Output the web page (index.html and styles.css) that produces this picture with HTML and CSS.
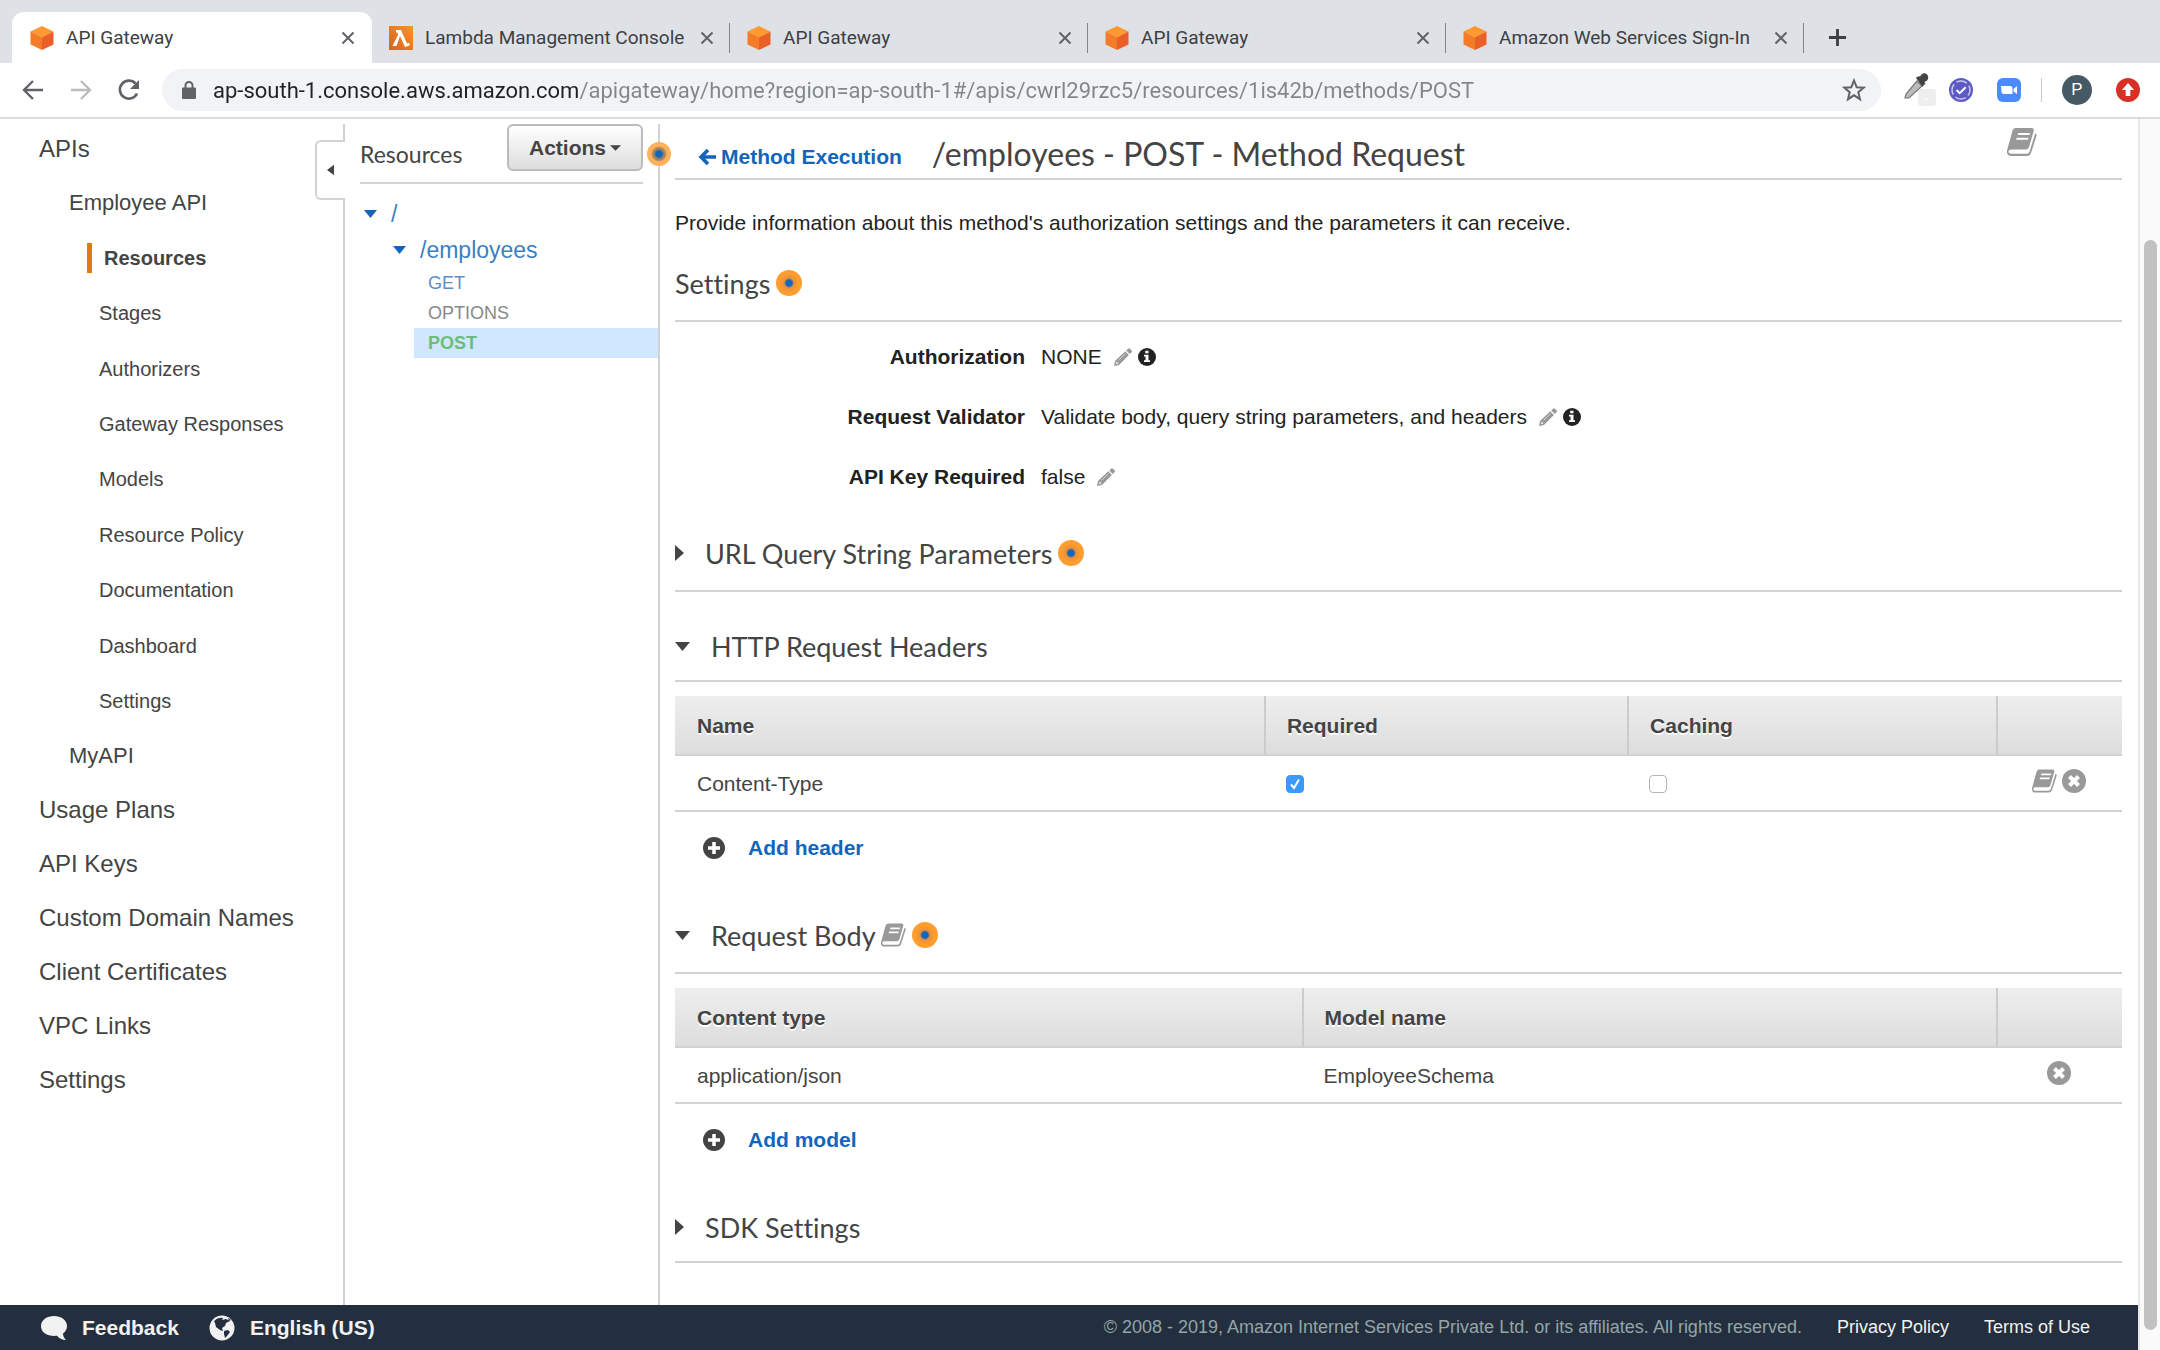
FILE: index.html
```html
<!DOCTYPE html>
<html lang="en">
<head>
<meta charset="utf-8">
<title>API Gateway</title>
<meta name="viewport" content="width=device-width, initial-scale=1.0">
<link rel="stylesheet" href="styles.css">
</head>
<body>

<!-- shared icons -->
<svg class="sprite" width="0" height="0" aria-hidden="true">
    <symbol id="cube" viewBox="0 0 24 24">
        <path d="M12 0 23.500 5.500 12 12 .5 5.500z" fill="#ff9a33"/>
        <path d="M.5 5.500 12 11.500V24L.5 18.500z" fill="#f47b28"/>
        <path d="M23.500 5.500 12 11.500V24l11.500-5.500z" fill="#ea5f28"/>
    </symbol>
    <symbol id="close" viewBox="0 0 14 14">
        <path d="M1.500 1.500l11 11M12.500 1.500l-11 11" stroke="#5f6368" stroke-width="2" fill="none"/>
    </symbol>
    <symbol id="book" viewBox="0 0 28 26">
        <path fill="#999" fill-rule="evenodd" d="M8 0h15q2.500 0 2 2.500L20.500 18q-.7 2-2.700 2H4q-2 0-2.500 1.500Q1 24 4 24h14.500q2 0 2.500-2L26.500 4.500q1.500 1 1 3L22.500 23q-1 3-4 3H4q-4.500 0-4-5L5 3Q5.800 0 8 0zM10.500 4.500 10 6.500h11l.5-2zM9 9l-.5 2h11l.5-2z"/>
    </symbol>
    <symbol id="pencil" viewBox="0 0 18 18">
        <path fill="#999" d="M14 .7q1-1 2 0l1.500 1.500q1 1 0 2L15.800 6 12.200 2.400zM11.300 3.300l3.600 3.600L5 17 0 18l1-5z"/>
        <path d="M4.500 12.500l7-7" stroke="#d5d5d5" stroke-width="1"/>
        <path d="M2.500 13.500l2 2-2.300.4z" fill="#fff"/>
    </symbol>
    <symbol id="info" viewBox="0 0 18 18">
        <circle cx="9" cy="9" r="9" fill="#222"/>
        <path fill="#fff" d="M7.200 2.800h3.300v2.500H7.200zM6 6.800h4.500v5.400H12V14H6v-1.800h1.500V8.600H6z"/>
    </symbol>
    <symbol id="remove" viewBox="0 0 24 24">
        <circle cx="12" cy="12" r="12" fill="#999"/>
        <path d="M7.500 7.500l9 9M16.500 7.500l-9 9" stroke="#fff" stroke-width="4"/>
    </symbol>
    <symbol id="plus" viewBox="0 0 22 22">
        <circle cx="11" cy="11" r="11" fill="#444"/>
        <path d="M11 5v12M5 11h12" stroke="#fff" stroke-width="3.500"/>
    </symbol>
</svg>

<header class="browser">
    <div class="tabs">
        <div class="tab active">
            <svg class="favicon"><use href="#cube"/></svg>
            <span>API Gateway</span>
            <button type="button" aria-label="Close tab"><svg><use href="#close"/></svg></button>
        </div>
        <div class="tab">
            <svg class="favicon" viewBox="0 0 24 24">
                <defs><linearGradient id="lam" x1="0" y1="1" x2="1" y2="0"><stop offset="0" stop-color="#d9601f"/><stop offset="1" stop-color="#f8942a"/></linearGradient></defs>
                <path d="M0 0h24v24H0z" fill="url(#lam)"/>
                <path d="M7 4h5l6 13.500 2-.7 1 2.500-5 1.700-5-11L7.500 20H3.500l5.700-11.500-1-2H7z" fill="#fff"/>
            </svg>
            <span>Lambda Management Console</span>
            <button type="button" aria-label="Close tab"><svg><use href="#close"/></svg></button>
        </div>
        <div class="tab">
            <svg class="favicon"><use href="#cube"/></svg>
            <span>API Gateway</span>
            <button type="button" aria-label="Close tab"><svg><use href="#close"/></svg></button>
        </div>
        <div class="tab">
            <svg class="favicon"><use href="#cube"/></svg>
            <span>API Gateway</span>
            <button type="button" aria-label="Close tab"><svg><use href="#close"/></svg></button>
        </div>
        <div class="tab">
            <svg class="favicon"><use href="#cube"/></svg>
            <span>Amazon Web Services Sign-In</span>
            <button type="button" aria-label="Close tab"><svg><use href="#close"/></svg></button>
        </div>
        <button type="button" class="new-tab" aria-label="New tab">
            <svg viewBox="0 0 20 20"><path d="M10 1v18M1 10h18" stroke="#3c4043" stroke-width="3"/></svg>
        </button>
    </div>

    <div class="toolbar">
        <button type="button" aria-label="Back"><svg viewBox="0 0 24 24"><path d="M22 12H4M12 3l-9 9 9 9" fill="none" stroke="#5f6368" stroke-width="2.400"/></svg></button>
        <button type="button" aria-label="Forward"><svg viewBox="0 0 24 24"><path d="M2 12h18M12 3l9 9-9 9" fill="none" stroke="#babcbe" stroke-width="2.400"/></svg></button>
        <button type="button" aria-label="Reload"><svg viewBox="0 0 24 24"><path d="M20 15.500A9 9 0 1 1 18.500 5.500" fill="none" stroke="#5f6368" stroke-width="2.600"/><path d="M22 2v9h-9z" fill="#5f6368"/></svg></button>
        <div class="address">
            <svg class="lock" viewBox="0 0 14 18"><path d="M1 6.500h12q1 0 1 1V17q0 1-1 1H1q-1 0-1-1V7.500q0-1 1-1z" fill="#5f6368"/><path d="M3.500 7V4.500a3.500 3.500 0 0 1 7 0V7" fill="none" stroke="#5f6368" stroke-width="2"/></svg>
            <input type="text" aria-label="Address" value="ap-south-1.console.aws.amazon.com/apigateway/home?region=ap-south-1#/apis/cwrl29rzc5/resources/1is42b/methods/POST">
            <button type="button" aria-label="Bookmark this page"><svg viewBox="0 0 24 24"><path d="M12 2.500l2.700 6.700 7 .5-5.400 4.500 1.700 7-6-3.900-6 3.900 1.700-7-5.400-4.500 7-.5z" fill="none" stroke="#5f6368" stroke-width="2"/></svg></button>
        </div>
        <div class="extensions">
            <button type="button" class="picker" aria-label="Color picker">
                <svg viewBox="0 0 34 34">
                    <rect x="15" y="16" width="18" height="17" rx="3" fill="#eee"/><circle cx="23" cy="26" r="1" fill="#fff"/>
                    <path d="M14 8l5 5L6 25l-4 0 1-4z" fill="#bbb" stroke="#777" stroke-width="1.200"/>
                    <path d="M14 5l2-1 1 1 2-3q2.500-2 4.500 0 2 2.500 0 5l-3 2 1 1.500-2 2z" fill="#444" stroke="#444" stroke-width="1.500"/>
                </svg>
            </button>
            <button type="button" aria-label="Task checker">
                <svg viewBox="0 0 24 24"><circle cx="12" cy="12" r="12" fill="#5d5ac6"/><circle cx="12" cy="12" r="9" fill="none" stroke="#c9c8f0" stroke-width="1.500" stroke-dasharray="11 3.140" stroke-dashoffset="5"/><path d="M7.500 12l3.200 3.200 6-6" fill="none" stroke="#fff" stroke-width="2"/></svg>
            </button>
            <button type="button" aria-label="Video meeting">
                <svg viewBox="0 0 24 24"><rect width="24" height="24" rx="6" fill="#4a8cff"/><path d="M4 8h9q2.500 0 2.500 2.500V16H7q-2.500 0-2.500-2.500zM16.500 11l3.500-3v8l-3.500-2.500z" fill="#fff"/></svg>
            </button>
            <span class="divider"></span>
            <button type="button" class="profile">P</button>
            <button type="button" aria-label="Update browser">
                <svg viewBox="0 0 24 24"><circle cx="12" cy="12" r="12" fill="#d93025"/><path d="M12 5l6 7h-3.700v6H9.700v-6H6z" fill="#fff"/></svg>
            </button>
        </div>
    </div>
</header>

<div class="viewport">
    <div class="page">
        <div class="workspace">
            <nav class="sidebar">
                <ul>
                    <li><a href="#">APIs</a></li>
                    <li>
                        <ul class="api-list">
                            <li><a href="#">Employee API</a>
                                <ul class="api-menu">
                                    <li class="current"><a href="#">Resources</a></li>
                                    <li><a href="#">Stages</a></li>
                                    <li><a href="#">Authorizers</a></li>
                                    <li><a href="#">Gateway Responses</a></li>
                                    <li><a href="#">Models</a></li>
                                    <li><a href="#">Resource Policy</a></li>
                                    <li><a href="#">Documentation</a></li>
                                    <li><a href="#">Dashboard</a></li>
                                    <li><a href="#">Settings</a></li>
                                </ul>
                            </li>
                            <li><a href="#">MyAPI</a></li>
                        </ul>
                    </li>
                    <li><a href="#">Usage Plans</a></li>
                    <li><a href="#">API Keys</a></li>
                    <li><a href="#">Custom Domain Names</a></li>
                    <li><a href="#">Client Certificates</a></li>
                    <li><a href="#">VPC Links</a></li>
                    <li><a href="#">Settings</a></li>
                </ul>
                <button type="button" class="collapse" aria-label="Collapse navigation"><svg viewBox="0 0 8 12"><path d="M8 0v12L0 6z" fill="#444"/></svg></button>
            </nav>

            <section class="resources">
                <div class="resources-head">
                    <h2>Resources</h2>
                    <button type="button" class="actions">Actions<svg viewBox="0 0 12 6"><path d="M0 0h12L6 6z" fill="#444"/></svg></button>
                    <span class="hint hint-edge"></span>
                </div>
                <ul class="tree">
                    <li class="tree-root"><svg viewBox="0 0 13 8"><path d="M0 0h13L6.500 8z" fill="#1166bb"/></svg><a href="#">/</a></li>
                    <li class="tree-child"><svg viewBox="0 0 13 8"><path d="M0 0h13L6.500 8z" fill="#1166bb"/></svg><a href="#">/employees</a></li>
                    <li class="method get"><a href="#">GET</a></li>
                    <li class="method options"><a href="#">OPTIONS</a></li>
                    <li class="method post"><a href="#">POST</a></li>
                </ul>
            </section>

            <main class="detail">
                <div class="detail-head">
                    <a href="#" class="back"><svg viewBox="0 0 18 18"><path d="M10 2L3 9l7 7M3 9h15" fill="none" stroke="#1166bb" stroke-width="3.600"/></svg>Method Execution</a>
                    <h1>/employees - POST - Method Request</h1>
                    <button type="button" class="icon-btn docs" aria-label="Documentation"><svg><use href="#book"/></svg></button>
                </div>
                <p class="intro">Provide information about this method's authorization settings and the parameters it can receive.</p>

                <h2 class="section-title with-hint">Settings<span class="hint"></span></h2>
                <dl class="settings">
                    <dt>Authorization</dt>
                    <dd>NONE <button type="button" class="icon-btn" aria-label="Edit authorization"><svg><use href="#pencil"/></svg></button><svg><use href="#info"/></svg></dd>
                    <dt>Request Validator</dt>
                    <dd>Validate body, query string parameters, and headers <button type="button" class="icon-btn" aria-label="Edit request validator"><svg><use href="#pencil"/></svg></button><svg><use href="#info"/></svg></dd>
                    <dt>API Key Required</dt>
                    <dd>false <button type="button" class="icon-btn" aria-label="Edit API key required"><svg><use href="#pencil"/></svg></button></dd>
                </dl>

                <section class="closed">
                    <h2 class="section-title with-hint"><svg class="arrow-right" viewBox="0 0 9 16"><path d="M0 0l9 8-9 8z" fill="#444"/></svg>URL Query String Parameters<span class="hint"></span></h2>
                </section>

                <section>
                    <h2 class="section-title"><svg class="arrow-down" viewBox="0 0 15 9"><path d="M0 0h15L7.500 9z" fill="#444"/></svg>HTTP Request Headers</h2>
                    <table class="headers-table">
                        <colgroup><col class="c-name"><col class="c-required"><col><col class="c-tools"></colgroup>
                        <thead>
                            <tr><th>Name</th><th>Required</th><th>Caching</th><th></th></tr>
                        </thead>
                        <tbody>
                            <tr>
                                <td>Content-Type</td>
                                <td><input type="checkbox" aria-label="Required" checked></td>
                                <td><input type="checkbox" aria-label="Caching"></td>
                                <td class="tools">
                                    <button type="button" class="icon-btn" aria-label="Documentation"><svg class="book"><use href="#book"/></svg></button>
                                    <button type="button" class="icon-btn" aria-label="Remove header"><svg><use href="#remove"/></svg></button>
                                </td>
                            </tr>
                        </tbody>
                    </table>
                    <div class="add"><svg><use href="#plus"/></svg><a href="#">Add header</a></div>
                </section>

                <section>
                    <h2 class="section-title with-hint"><svg class="arrow-down" viewBox="0 0 15 9"><path d="M0 0h15L7.500 9z" fill="#444"/></svg>Request Body<svg class="book"><use href="#book"/></svg><span class="hint"></span></h2>
                    <table class="body-table">
                        <colgroup><col class="c-type"><col><col class="c-tools"></colgroup>
                        <thead>
                            <tr><th>Content type</th><th>Model name</th><th></th></tr>
                        </thead>
                        <tbody>
                            <tr>
                                <td>application/json</td>
                                <td>EmployeeSchema</td>
                                <td class="tools">
                                    <button type="button" class="icon-btn" aria-label="Remove model"><svg><use href="#remove"/></svg></button>
                                </td>
                            </tr>
                        </tbody>
                    </table>
                    <div class="add"><svg><use href="#plus"/></svg><a href="#">Add model</a></div>
                </section>

                <section class="closed">
                    <h2 class="section-title"><svg class="arrow-right" viewBox="0 0 9 16"><path d="M0 0l9 8-9 8z" fill="#444"/></svg>SDK Settings</h2>
                </section>
            </main>
        </div>

        <footer class="footer">
            <a href="#" class="footer-main"><svg viewBox="0 0 26 26"><path d="M13 1c7 0 13 4 13 10 0 3-1.500 5.500-4 7.500 0 2.500 1 4.500 3 6.500-4 0-7-1.500-9-4.200C6.500 21.500 0 18 0 11 0 5 6 1 13 1z" fill="#f2f2f2"/></svg>Feedback</a>
            <a href="#" class="footer-main"><svg viewBox="0 0 26 26"><circle cx="13" cy="13" r="12.500" fill="#f2f2f2"/><path d="M5 6q4-4 9-3l-1 2 4-1 4 2-4 2-1 3-3 2 1 3-3-1-4-3-1-4zM15 16l4-1 2 2-3 4-2 2-1-4zM19 3l3 2-2 1z" fill="#232f3e"/></svg>English (US)</a>
            <span class="copyright">© 2008 - 2019, Amazon Internet Services Private Ltd. or its affiliates. All rights reserved.</span>
            <a href="#">Privacy Policy</a>
            <a href="#">Terms of Use</a>
        </footer>
    </div>
    <div class="scrollbar"><div class="thumb"></div></div>
</div>

</body>
</html>
```
FILE: styles.css
```css
* {
    box-sizing: border-box;
}
body {
    margin: 0;
    min-height: 100vh;
    display: flex;
    flex-direction: column;
    font-family: "Liberation Sans", Arial, sans-serif;
    font-size: 20px;
    color: #444;
    background: #fff;
}
ul, dl, dd, h1, h2, p {
    margin: 0;
    padding: 0;
    list-style: none;
}
h1, h2 {
    font-family: Lato, sans-serif;
    font-weight: normal;
    font-variant-ligatures: none;
}
a {
    color: inherit;
    text-decoration: none;
}
button {
    padding: 0;
    border: 0;
    background: none;
    font-family: inherit;
    cursor: pointer;
}
button svg {
    display: block;
}
.sprite {
    position: absolute;
}

/* browser tabs */
.tabs {
    display: flex;
    height: 63px;
    padding: 12px 0 0 12px;
    background: #dee1e6;
    font-family: Roboto, sans-serif;
    font-size: 19px;
    color: #3c4043;
}
.tab {
    display: flex;
    align-items: center;
    flex: 0 1 358px;
    padding: 0 16px 0 17px;
    position: relative;
}
.tab.active {
    flex-basis: 360px;
    background: #fff;
    border-radius: 12px 12px 0 0;
    padding: 0 17px 0 18px;
}
.tab:not(.active)::after {
    content: "";
    position: absolute;
    right: 0;
    top: 11px;
    width: 1px;
    height: 30px;
    background: #80868b;
}
.tab span {
    flex: 1;
    white-space: nowrap;
}
.tab button svg {
    width: 14px;
    height: 14px;
}
.favicon {
    width: 24px;
    height: 24px;
    margin-right: 12px;
}
.new-tab {
    margin-left: 24px;
}
.new-tab svg {
    width: 19px;
    height: 19px;
}

/* address bar */
.toolbar {
    display: flex;
    align-items: center;
    gap: 24px;
    height: 56px;
    padding: 0 20px 0 21px;
    border-bottom: 2px solid #dadce0;
}
.toolbar button svg {
    width: 24px;
    height: 24px;
}
.address {
    flex: 1;
    display: flex;
    align-items: center;
    height: 42px;
    padding: 0 15px 0 20px;
    margin-left: -3px;
    border-radius: 21px;
    background: #f1f3f4;
}
.lock {
    width: 14px;
    height: 18px;
}
.address input {
    flex: 1;
    min-width: 0;
    margin-left: 17px;
    padding: 0;
    border: 0;
    font-family: Roboto, sans-serif;
    font-size: 22px;
    /* host dark, path grey */
    color: transparent;
    background: linear-gradient(to right, #202124 367px, #80868b 367px);
    -webkit-background-clip: text;
    background-clip: text;
}
.extensions {
    display: flex;
    align-items: center;
    gap: 24px;
}
.extensions .picker {
    margin: 0 -12px 0 -2px;
}
.toolbar .picker svg {
    width: 34px;
    height: 34px;
}
.divider {
    width: 1px;
    height: 24px;
    margin: 0 -4px;
    background: #ccc;
}
.profile {
    width: 30px;
    height: 30px;
    border-radius: 50%;
    background: #455a64;
    color: #fff;
    font-size: 17px;
}

/* page area */
.viewport {
    flex: 1;
    display: grid;
    grid-template-columns: 1fr 22px;
}
.page {
    display: flex;
    flex-direction: column;
    min-width: 0;
}
.workspace {
    flex: 1;
    display: flex;
    padding-top: 5px;
}
.scrollbar {
    display: flex;
    padding: 121px 3px 20px 4px;
    border-left: 2px solid #e8e8e8;
    background: #fafafa;
}
.thumb {
    flex: 1;
    border-radius: 7px;
    background: #c1c1c1;
}

/* left navigation */
.sidebar {
    flex: 0 0 345px;
    position: relative;
    padding-left: 39px;
    border-right: 2px solid #d2d2d2;
    font-size: 24px;
    line-height: 54px;
}
.sidebar > ul {
    margin-top: -2px;
}
.sidebar a {
    display: block;
}
.api-list {
    padding-left: 30px;
    font-size: 22px;
}
.api-menu {
    display: grid;
    grid-auto-rows: 1fr;
    align-items: center;
    min-height: 499px;
    padding-left: 30px;
    font-size: 20px;
}
.api-menu .current {
    margin-left: -12px;
    padding-left: 12px;
    border-left: 5px solid #e47911;
}
.api-menu .current a {
    line-height: 30px;
    font-weight: bold;
}
.collapse {
    position: absolute;
    top: 16px;
    right: -2px;
    width: 30px;
    height: 60px;
    padding-left: 10px;
    border: 2px solid #d2d2d2;
    border-right: 0;
    border-radius: 6px 0 0 6px;
    background: #fff;
}
.collapse svg {
    width: 7px;
    height: 12px;
}

/* resource tree */
.resources {
    flex: 0 0 315px;
    padding-left: 15px;
    border-right: 2px solid #d2d2d2;
}
.resources-head {
    position: relative;
    display: flex;
    justify-content: space-between;
    align-items: flex-start;
    height: 60px;
    margin-right: 15px;
    border-bottom: 2px solid #d2d2d2;
}
.resources-head h2 {
    font-size: 23px;
    line-height: 60px;
}
.actions {
    display: flex;
    align-items: center;
    justify-content: center;
    gap: 4px;
    width: 136px;
    height: 47px;
    border: 2px solid #bbb;
    border-radius: 6px;
    background: linear-gradient(#fff, #ddd);
    color: #444;
    font-size: 21px;
    font-weight: bold;
}
.actions svg {
    width: 11px;
    height: 6px;
}
.hint {
    flex: none;
    width: 26px;
    height: 26px;
    border-radius: 50%;
    background: radial-gradient(circle, #1166bb 3px, #e8923c 5px, #f8962f 8px, #ff9d2e 9px);
}
.hint-edge {
    position: absolute;
    right: -28px;
    top: 18px;
    width: 24px;
    height: 24px;
    background: radial-gradient(circle, #1166bb 3px, #a58358 5px, #a58358 6px, #ffb15c 8px);
}
.tree {
    padding-top: 12px;
    color: #3b7fc4;
}
.tree li {
    display: flex;
    align-items: center;
    height: 36px;
}
.tree svg {
    width: 13px;
    height: 8px;
    margin-right: 14px;
}
.tree-root, .tree-child {
    font-size: 23px;
}
.tree-root {
    padding-left: 4px;
}
.tree-child {
    padding-left: 33px;
}
.tree .method {
    height: 30px;
    margin-left: 54px;
    padding-left: 14px;
    font-size: 18px;
}
.get {
    color: #5c8fc4;
}
.options {
    color: #888;
}
.post {
    background: #d1e7ff;
    color: #6bbd7b;
    font-weight: bold;
}

/* method detail */
.detail {
    flex: 1;
    min-width: 0;
    padding: 0 16px 0 15px;
    font-size: 21px;
}
.detail svg {
    flex: none;
    width: 18px;
    height: 18px;
}
.detail-head {
    display: flex;
    align-items: center;
    height: 56px;
    padding: 4px 85px 0 23px;
    border-bottom: 2px solid #d2d2d2;
}
.back {
    display: flex;
    align-items: center;
    gap: 5px;
    padding-top: 8px;
    color: #1166bb;
    font-weight: bold;
}
h1 {
    flex: 1;
    margin-left: 30px;
    font-size: 32px;
}
.icon-btn svg {
    vertical-align: middle;
}
.docs {
    align-self: flex-start;
}
.detail .docs svg {
    width: 30px;
    height: 28px;
}
.intro {
    margin-top: 28px;
    line-height: 30px;
    color: #222;
}
.section-title {
    display: flex;
    align-items: center;
    height: 70px;
    border-bottom: 2px solid #d2d2d2;
    font-size: 27px;
}
.with-hint {
    height: 76px;
}
.intro + .section-title {
    margin-top: 8px;
}
.section-title .hint {
    margin-left: 6px;
}
.detail .arrow-right {
    width: 9px;
    height: 18px;
    margin-right: 21px;
}
.detail .arrow-down {
    width: 15px;
    height: 9px;
    margin-right: 21px;
}
.detail .book {
    width: 25px;
    height: 24px;
}
.section-title .book {
    margin-left: 5px;
}
.settings {
    display: grid;
    grid-template-columns: 350px 1fr;
    column-gap: 16px;
    padding: 5px 0 6px;
    line-height: 60px;
    color: #222;
}
.settings dt {
    text-align: right;
    font-weight: bold;
}
.settings dd {
    display: flex;
    align-items: center;
    gap: 6px;
}
.settings dd button {
    margin-left: 6px;
}
.closed {
    padding: 3px 0 20px;
}

/* tables */
table {
    width: 100%;
    margin-top: 14px;
    table-layout: fixed;
    border-collapse: separate;
    border-spacing: 0;
}
.c-name {
    width: 40.7%;
}
.c-required {
    width: 25.1%;
}
.c-type {
    width: 43.3%;
}
.c-tools {
    width: 126px;
}
th, td {
    padding: 2px 22px 0;
    border-bottom: 2px solid #d2d2d2;
    text-align: left;
}
th {
    height: 60px;
    background: linear-gradient(#eee, #ddd);
    text-shadow: 0 2px 0 #fff;
}
th + th {
    padding-left: 21px;
    border-left: 2px solid #ccc;
}
td {
    height: 56px;
}
td input {
    display: block;
    appearance: none;
    width: 18px;
    height: 18px;
    margin: 0;
    border: 1px solid #b5b5b5;
    border-radius: 4px;
    background: #fff;
}
td input:checked {
    border-color: #3b99fc;
    background: #3b99fc url("data:image/svg+xml,%3Csvg xmlns='http://www.w3.org/2000/svg' viewBox='0 0 16 16'%3E%3Cpath d='M4 8.500l3 3.500 5-8.500' fill='none' stroke='white' stroke-width='2'/%3E%3C/svg%3E");
}
.tools {
    padding: 0;
    text-align: center;
    line-height: 24px;
}
.tools svg {
    width: 24px;
    height: 24px;
}
.add {
    display: flex;
    align-items: center;
    gap: 23px;
    height: 72px;
    margin-bottom: 14px;
    padding-left: 28px;
    color: #1166bb;
    font-weight: bold;
}
.detail .add svg {
    width: 22px;
    height: 22px;
}

/* footer */
.footer {
    display: flex;
    align-items: center;
    gap: 30px;
    height: 45px;
    padding: 0 48px 0 41px;
    background: #232f3e;
    color: #f2f2f2;
    font-size: 18px;
}
.footer-main {
    display: flex;
    align-items: center;
    gap: 15px;
    font-size: 21px;
    font-weight: bold;
}
.footer-main svg {
    width: 26px;
    height: 26px;
}
.copyright {
    margin-left: auto;
    color: #95a5a6;
}
.footer > a:not(.footer-main) {
    margin-left: 5px;
}
```
